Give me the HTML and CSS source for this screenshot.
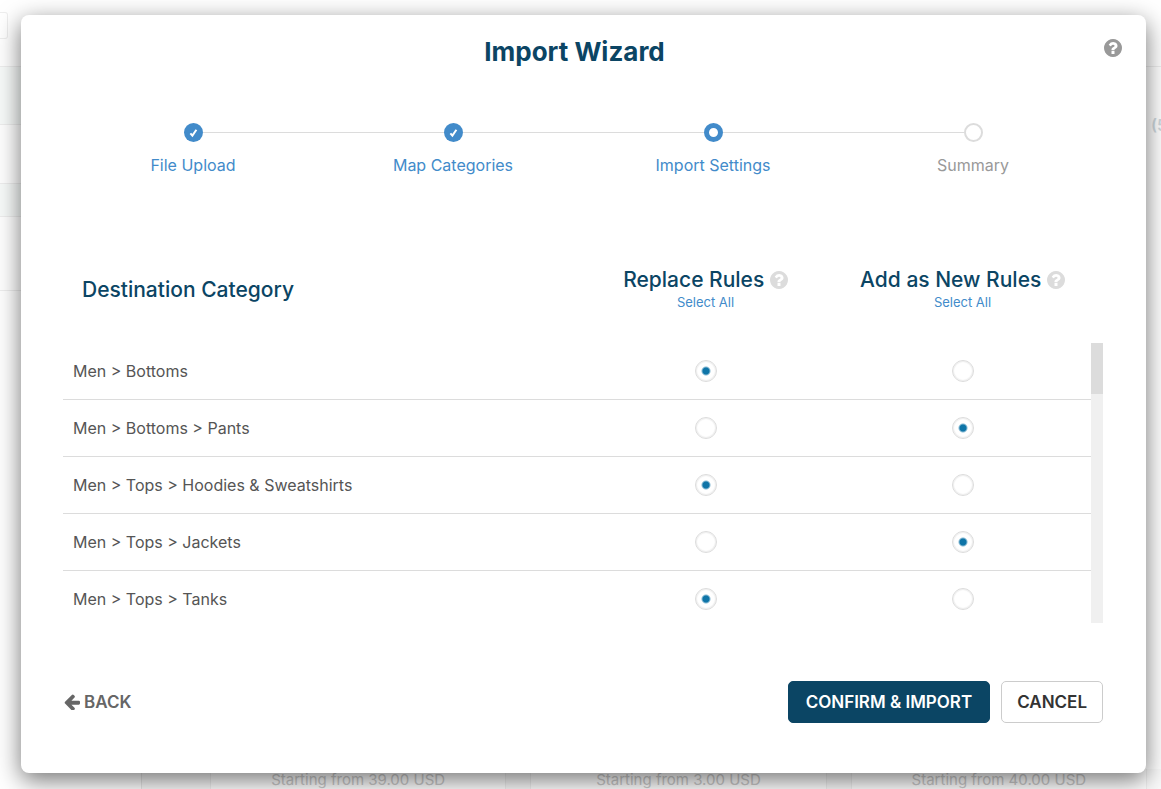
FILE: index.html
```
<!DOCTYPE html>
<html lang="en">
<head>
  <meta charset="UTF-8">
  <meta name="viewport" content="width=device-width, initial-scale=1.0">
  <title>Import Wizard</title>
  <link rel="stylesheet" href="styles.css">
</head>
<body>
<svg width="0" height="0" class="icon-defs" aria-hidden="true">
  <symbol id="icon-help" viewBox="128 128 1536 1536">
    <path d="M1024 1376v-192q0-14-9-23t-23-9h-192q-14 0-23 9t-9 23v192q0 14 9 23t23 9h192q14 0 23-9t9-23zm256-672q0-88-55.5-163t-138.5-116-170-41q-243 0-371 213-15 24 8 42l132 100q7 6 19 6 16 0 25-12 53-68 86-92 34-24 86-24 48 0 85.5 26t37.5 59q0 38-20 61t-68 45q-63 28-115.5 86.5t-52.5 125.5v36q0 14 9 23t23 9h192q14 0 23-9t9-23q0-19 21.5-49.5t54.5-49.5q32-18 49-28.5t46-35 44.5-48 28-60.5 12.5-81zm384 192q0 209-103 385.5t-279.5 279.5-385.5 103-385.5-103-279.5-279.5-103-385.5 103-385.5 279.5-279.5 385.5-103 385.5 103 279.5 279.5 103 385.5z"/>
  </symbol>
  <symbol id="icon-back" viewBox="128 128 1536 1536">
    <path d="M1664 896v128q0 53-32.5 90.5t-84.5 37.5h-704l293 294q38 36 38 90t-38 90l-75 76q-37 37-90 37-52 0-91-37l-651-652q-37-37-37-90 0-52 37-91l651-650q38-38 91-38 52 0 90 38l75 74q38 38 38 91t-38 91l-293 293h704q52 0 84.5 37.5t32.5 90.5z"/>
  </symbol>
</svg>

<!-- Product page behind the dialog -->
<div class="page">
  <div class="page-toolbar"><div class="page-box"></div></div>
  <div class="page-top">
    <div class="page-rows">
      <div class="page-row page-row-head"></div>
      <div class="page-row page-row-filter"></div>
      <div class="page-row page-row-tint"></div>
      <div class="page-row page-row-tall"></div>
    </div>
    <span class="page-count">(5)</span>
  </div>
  <div class="page-main">
    <div class="page-cards">
      <div class="page-card">Starting from 39.00 USD</div>
      <div class="page-card">Starting from 3.00 USD</div>
      <div class="page-card">Starting from 40.00 USD</div>
    </div>
  </div>
</div>

<div class="overlay">
  <div class="modal" role="dialog" aria-labelledby="wizardTitle">
    <div class="modal-header">
      <h1 id="wizardTitle">Import Wizard</h1>
      <button type="button" class="help-btn" aria-label="Help"><svg class="icon"><use href="#icon-help"/></svg></button>
    </div>

    <ol class="steps">
      <li class="step done"><div class="step-track"><span class="step-dot"><svg viewBox="0 0 19 19"><path d="M6.4 10.4l2 2.2 4-5.8" /></svg></span></div>File Upload</li>
      <li class="step done"><div class="step-track"><span class="step-dot"><svg viewBox="0 0 19 19"><path d="M6.4 10.4l2 2.2 4-5.8" /></svg></span></div>Map Categories</li>
      <li class="step active"><div class="step-track"><span class="step-dot"></span></div>Import Settings</li>
      <li class="step"><div class="step-track"><span class="step-dot"></span></div>Summary</li>
    </ol>

    <div class="rules-head">
      <h2>Destination Category</h2>
      <div class="rules-option">
        <h2>Replace Rules <svg class="icon"><use href="#icon-help"/></svg></h2>
        <a href="#" id="selectReplace">Select All</a>
      </div>
      <div class="rules-option">
        <h2>Add as New Rules <svg class="icon"><use href="#icon-help"/></svg></h2>
        <a href="#" id="selectAdd">Select All</a>
      </div>
    </div>

    <div class="rules-body">
      <table class="rules-table">
        <tbody>
          <tr>
            <td>Men &gt; Bottoms</td>
            <td><input type="radio" name="rule1" value="replace" aria-label="Replace rules" checked></td>
            <td><input type="radio" name="rule1" value="add" aria-label="Add as new rules"></td>
          </tr>
          <tr>
            <td>Men &gt; Bottoms &gt; Pants</td>
            <td><input type="radio" name="rule2" value="replace" aria-label="Replace rules"></td>
            <td><input type="radio" name="rule2" value="add" aria-label="Add as new rules" checked></td>
          </tr>
          <tr>
            <td>Men &gt; Tops &gt; Hoodies &amp; Sweatshirts</td>
            <td><input type="radio" name="rule3" value="replace" aria-label="Replace rules" checked></td>
            <td><input type="radio" name="rule3" value="add" aria-label="Add as new rules"></td>
          </tr>
          <tr>
            <td>Men &gt; Tops &gt; Jackets</td>
            <td><input type="radio" name="rule4" value="replace" aria-label="Replace rules"></td>
            <td><input type="radio" name="rule4" value="add" aria-label="Add as new rules" checked></td>
          </tr>
          <tr>
            <td>Men &gt; Tops &gt; Tanks</td>
            <td><input type="radio" name="rule5" value="replace" aria-label="Replace rules" checked></td>
            <td><input type="radio" name="rule5" value="add" aria-label="Add as new rules"></td>
          </tr>
        </tbody>
      </table>
      <div class="scrollbar"><div class="scrollbar-thumb"></div></div>
    </div>

    <div class="modal-footer">
      <button type="button" class="btn-back"><svg class="icon"><use href="#icon-back"/></svg>BACK</button>
      <button type="button" class="btn btn-primary">CONFIRM &amp; IMPORT</button>
      <button type="button" class="btn">CANCEL</button>
    </div>
  </div>
</div>

<script>
  function selectAll(value) {
    document.querySelectorAll('.rules-table input[value="' + value + '"]').forEach(input => {
      input.checked = true;
    });
  }

  document.getElementById('selectReplace').addEventListener('click', (e) => {
    e.preventDefault();
    selectAll('replace');
  });
  document.getElementById('selectAdd').addEventListener('click', (e) => {
    e.preventDefault();
    selectAll('add');
  });
</script>
</body>
</html>
```
FILE: styles.css
```
* {
  box-sizing: border-box;
}
body {
  margin: 0;
  font-family: Inter, "Open Sans", sans-serif;
  font-size: 16px;
  color: #555;
  background: #fff;
}
h1, h2 {
  margin: 0;
  color: #0b4564;
}
a {
  color: #428bca;
  text-decoration: none;
}
button {
  font-family: inherit;
  cursor: pointer;
}
.icon-defs {
  position: absolute;
}
.icon {
  width: 18px;
  height: 18px;
  fill: currentColor;
}

/* page behind */
.page {
  display: flex;
  flex-direction: column;
  height: 100vh;
  overflow: hidden;
}
.page-toolbar {
  height: 66px;
  padding-top: 12px;
}
.page-box {
  width: 8px;
  height: 27px;
  border: 1px solid #eee;
  border-left: 0;
  border-radius: 0 3px 3px 0;
}
.page-top {
  display: flex;
  border-top: 1px solid #eee;
}
.page-rows {
  flex: 1;
  max-width: 50%;
}
.page-row {
  border-bottom: 1px solid #eee;
}
.page-row-head {
  height: 58px;
  background: #f8fbfa;
}
.page-row-filter {
  height: 59px;
}
.page-row-tint {
  height: 33px;
  background: #f8fbfa;
}
.page-row-tall {
  height: 74px;
}
.page-count {
  margin: 48px -12px 0 auto;
  line-height: 20px;
  font-weight: 600;
  color: #cfdae0;
}
.page-main {
  flex: 1;
  display: flex;
  align-items: flex-end;
}
.page-cards {
  flex: 1;
  display: grid;
  grid-template-columns: repeat(3, 1fr);
  gap: 24px;
  margin-left: 141px;
  padding: 0 14px 0 68px;
  border-left: 1px solid #e8e8e8;
  background: #fafafa;
}
.page-card {
  height: 20px;
  border: solid #f0f0f0;
  border-width: 0 1px;
  background: #fff;
  text-align: center;
  font-size: 15px;
  line-height: 22px;
  color: #ccc;
}

/* dialog */
.overlay {
  position: absolute;
  top: 0;
  left: 0;
  right: 0;
  padding: 15px 15px 16px 21px;
}
.modal {
  padding: 19px 43px 50px 42px;
  background: #fff;
  border-radius: 8px;
  box-shadow: 0 7px 24px rgba(0, 0, 0, 0.55);
}
.modal-header {
  display: flex;
  align-items: center;
  margin-right: -19px;
}
.modal-header h1 {
  flex: 1;
  padding-right: 18px;
  font-size: 26px;
  line-height: 36px;
  text-align: center;
}
.help-btn {
  display: flex;
  padding: 0 0 8px;
  border: none;
  background: none;
  color: #999;
}

.steps {
  display: grid;
  grid-template-columns: repeat(4, 1fr);
  margin: 53px 0 0;
  padding: 0;
  list-style: none;
}
.step {
  font-size: 16px;
  line-height: 20px;
  text-align: center;
  color: #999;
}
.step.done, .step.active {
  color: #428bca;
}
.step-track {
  display: flex;
  align-items: center;
  margin-bottom: 13px;
}
.step-track::before, .step-track::after {
  content: "";
  flex: 1;
  height: 1px;
  background: #dcdcdc;
}
.step:first-child .step-track::before, .step:last-child .step-track::after {
  background: none;
}
.step-dot {
  width: 19px;
  height: 19px;
  border: 2px solid #dcdcdc;
  border-radius: 50%;
}
.step-dot svg {
  display: block;
  fill: none;
  stroke: #fff;
  stroke-width: 2;
}
.done .step-dot {
  border: none;
  background: #428bca;
}
.active .step-dot {
  border: 5px solid #428bca;
}

.rules-head {
  display: grid;
  grid-template-columns: 2fr 1fr 1fr;
  align-items: center;
  margin: 93px 12px 0 0;
}
.rules-head h2 {
  font-size: 21px;
  font-weight: 500;
  line-height: 24px;
}
.rules-head > h2 {
  padding-left: 19px;
}
.rules-option {
  text-align: center;
  font-size: 13px;
  line-height: 20px;
}
.rules-option .icon {
  vertical-align: -2px;
  color: #dcdcdc;
}
.rules-body {
  display: flex;
  align-items: flex-start;
  height: 280px;
  margin-top: 31px;
  overflow: hidden;
}
.rules-table {
  flex: 1;
  table-layout: fixed;
  border-spacing: 0;
}
.rules-table td {
  width: 25%;
  height: 57px;
  padding: 0;
  border-bottom: 1px solid #dcdcdc;
  text-align: center;
}
.rules-table td:first-child {
  width: 50%;
  padding-left: 10px;
  text-align: left;
}
.rules-table input {
  appearance: none;
  display: block;
  width: 22px;
  height: 22px;
  margin: 0 auto;
  border: 1px solid #dcdcdc;
  border-radius: 50%;
  background: #fff;
  box-shadow: inset 0 0 1px 1px #eee;
}
.rules-table input:checked {
  background: radial-gradient(circle, #0f75a8 3px, #fff 5px);
}
.scrollbar {
  width: 12px;
  height: 100%;
  background: #f0f0f0;
}
.scrollbar-thumb {
  height: 51px;
  background: #dcdcdc;
}

.modal-footer {
  display: flex;
  align-items: center;
  gap: 11px;
  margin-top: 58px;
}
.btn {
  height: 42px;
  padding: 0 15px;
  border: 1px solid #ccc;
  border-radius: 5px;
  background: #fff;
  font-size: 17px;
  font-weight: 600;
  color: #333;
}
.btn-primary {
  padding: 0 17px;
  border-color: #0b4564;
  background: #0b4564;
  color: #fff;
}
.btn-back {
  display: flex;
  align-items: center;
  gap: 4px;
  margin-right: auto;
  padding: 0 1px;
  border: none;
  background: none;
  font-size: 17px;
  font-weight: 600;
  color: #666;
}
.btn-back .icon {
  width: 16px;
  height: 16px;
}
```
